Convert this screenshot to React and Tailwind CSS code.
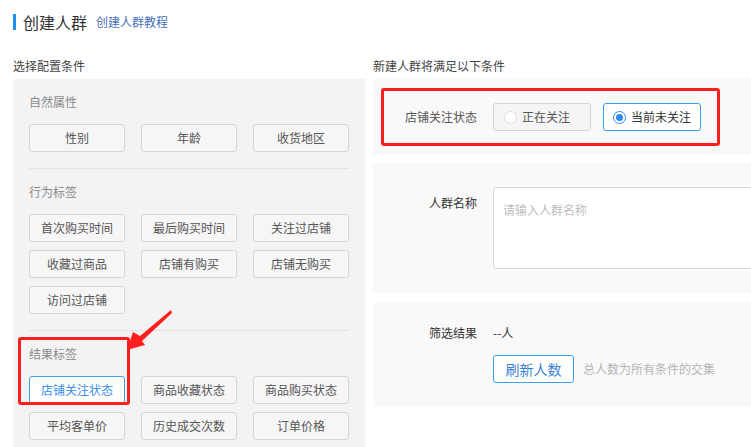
import React from "react";

const font = { fontFamily: '"Noto Sans CJK SC", "Noto Sans", sans-serif' };

function TagButton({ children, active }) {
  return (
    <div
      className={
        "h-[28px] flex items-center justify-center rounded-[3px] border text-[12px] leading-4 " +
        (active
          ? "border-[#3a9ff0] bg-white text-[#3a8ee6]"
          : "border-[#d6d6d6] bg-[#f6f6f6] text-[#555]")
      }
    >
      {children}
    </div>
  );
}

function Section({ title, items, last, children }) {
  return (
    <div className={"relative mx-4 pt-[15px] pb-4 " + (last ? "" : "border-b border-[#e3e3e3]")}>
      <div className="h-4 text-[12px] leading-4 text-[#8a8a8a]">{title}</div>
      <div className="mt-[14px] grid grid-cols-3 gap-x-4 gap-y-2">
        {items.map((it, i) => (
          <TagButton key={i} active={it.active}>
            {it.label}
          </TagButton>
        ))}
      </div>
      {children}
    </div>
  );
}

export default function App() {
  return (
    <div className="relative w-[751px] h-[447px] overflow-hidden bg-white" style={font}>
      {/* Title */}
      <div className="flex items-center h-4 mt-[14px] ml-[13px]">
        <div className="w-[3px] h-4 bg-[#1e8fef]" />
        <span className="ml-[7px] text-[16px] leading-4 text-[#333]">创建人群</span>
        <span className="ml-[9px] text-[12px] leading-4 text-[#4a6fb8]">创建人群教程</span>
      </div>

      <div className="flex mt-[28px] ml-[13px] gap-2">
        {/* Left column */}
        <div className="w-[352px] shrink-0">
          <div className="h-4 text-[12px] leading-4 text-[#444]">选择配置条件</div>
          <div className="mt-[5px] bg-[#f3f3f3] pb-10">
            <Section
              title="自然属性"
              items={[{ label: "性别" }, { label: "年龄" }, { label: "收货地区" }]}
            />
            <Section
              title="行为标签"
              items={[
                { label: "首次购买时间" },
                { label: "最后购买时间" },
                { label: "关注过店铺" },
                { label: "收藏过商品" },
                { label: "店铺有购买" },
                { label: "店铺无购买" },
                { label: "访问过店铺" },
              ]}
            />
            <Section
              title="结果标签"
              last
              items={[
                { label: "店铺关注状态", active: true },
                { label: "商品收藏状态" },
                { label: "商品购买状态" },
                { label: "平均客单价" },
                { label: "历史成交次数" },
                { label: "订单价格" },
              ]}
            >
              <div className="absolute left-[-11px] top-[6px] w-[112px] h-[68px] rounded-[3px] border-[3px] border-[#ff1f1f] pointer-events-none" />
            </Section>
          </div>
        </div>

        {/* Right column */}
        <div className="w-[420px] shrink-0">
          <div className="h-4 text-[12px] leading-4 text-[#444]">新建人群将满足以下条件</div>

          {/* Panel 1 */}
          <div className="mt-[5px] h-[76px] bg-[#f9f9f9] pt-[9px] pl-2">
            <div className="w-[339px] h-[58px] rounded-[3px] border-[3px] border-[#ff1f1f] flex items-center pl-[21px]">
              <span className="w-[72px] text-[12px] leading-4 text-[#555]">店铺关注状态</span>
              <div className="ml-4 flex gap-3">
                <div className="w-[98px] h-[28px] rounded-[3px] border border-[#d4d4d4] bg-[#f5f5f5] flex items-center pl-[10px]">
                  <span className="w-[13px] h-[13px] rounded-full border border-[#dcdcdc] bg-white" />
                  <span className="ml-[5px] text-[12px] leading-4 text-[#555]">正在关注</span>
                </div>
                <div className="w-[98px] h-[28px] rounded-[3px] border border-[#3a9ff0] bg-white flex items-center pl-[9px]">
                  <span className="w-[13px] h-[13px] rounded-full border border-[#2d8cf0] bg-white flex items-center justify-center">
                    <span className="w-[7px] h-[7px] rounded-full bg-[#2d8cf0]" />
                  </span>
                  <span className="ml-[5px] text-[12px] leading-4 text-[#333]">当前未关注</span>
                </div>
              </div>
            </div>
          </div>

          {/* Panel 2 */}
          <div className="mt-2 h-[130px] bg-[#f9f9f9] pt-6 flex">
            <div className="w-[104px] pt-[8px] text-right text-[12px] leading-4 text-[#333]">人群名称</div>
            <div className="ml-4 w-[300px] h-[82px] rounded-[3px] border border-[#dadada] bg-white px-[9px] pt-[8px]">
              <span className="text-[12px] leading-4 text-[#bdbdbd]">请输入人群名称</span>
            </div>
          </div>

          {/* Panel 3 */}
          <div className="mt-[9px] h-[105px] bg-[#f9f9f9] pt-[21px]">
            <div className="flex items-center h-5">
              <div className="w-[104px] text-right text-[12px] leading-4 text-[#333]">筛选结果</div>
              <div className="ml-4 text-[12px] leading-4 text-[#333]">--人</div>
            </div>
            <div className="mt-3 ml-[120px] flex items-center">
              <div className="w-[81px] h-[28px] rounded-[3px] border border-[#3a9ff0] bg-white flex items-center justify-center text-[14px] leading-4 text-[#3a7fd5]">
                刷新人数
              </div>
              <span className="ml-[9px] text-[12px] leading-4 text-[#b5b5b5]">总人数为所有条件的交集</span>
            </div>
          </div>
        </div>
      </div>

      {/* Annotation arrow */}
      <svg className="absolute left-0 top-0 pointer-events-none" width="751" height="447">
        <polygon
          points="171,310 140,336 133,332 127,350 145,345 142,341 172,313"
          fill="#ff1f1f"
        />
      </svg>
    </div>
  );
}
